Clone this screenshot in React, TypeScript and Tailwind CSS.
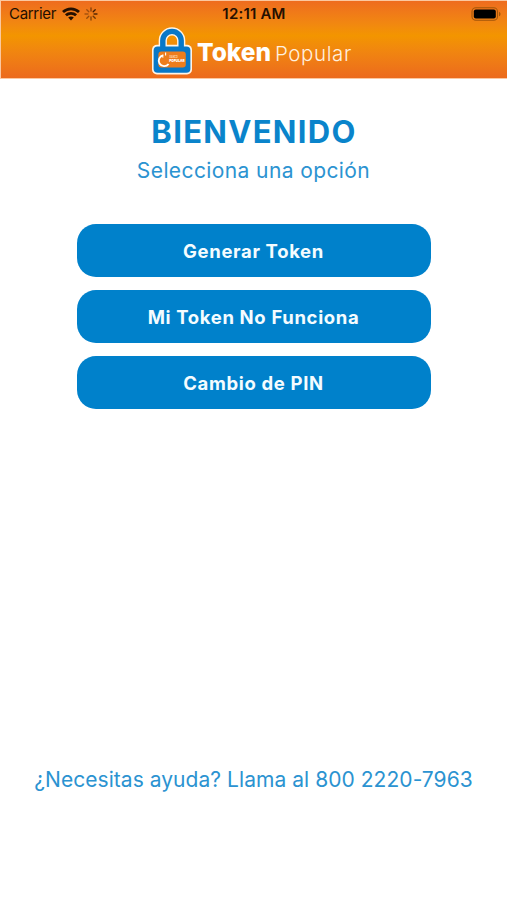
const options = ["Generar Token", "Mi Token No Funciona", "Cambio de PIN"];

const WifiIcon = () => (
  <svg viewBox="0 0 18 14" className="w-[18px] h-[14px] shrink-0" fill="none" stroke="#240f00" strokeWidth="2.8">
    <path d="M1 5.1C5.5.8 12.5.8 17 5.1" />
    <path d="M3.9 8.3c2.9-2.7 7.3-2.7 10.2 0" />
    <path d="M6.2 10.6c1.6-1.5 4-1.5 5.6 0L9 13.4z" fill="#240f00" stroke="none" />
  </svg>
);

const Spinner = () => (
  <svg viewBox="0 0 14 14" className="w-[14px] h-[14px] shrink-0" stroke="#3b1900" strokeWidth="1.3" strokeLinecap="round">
    <path d="M7 1v3" opacity=".6" />
    <path d="M11.2 2.8 9.2 4.8" opacity=".95" />
    <path d="M13 7h-3" opacity=".85" />
    <path d="m11.2 11.2-2-2" opacity=".7" />
    <path d="M7 13v-3" opacity=".6" />
    <path d="m2.8 11.2 2-2" opacity=".5" />
    <path d="M1 7h3" opacity=".4" />
    <path d="m2.8 2.8 2 2" opacity=".45" />
  </svg>
);

const Battery = () => (
  <svg viewBox="0 0 30 14" className="w-[30px] h-[14px]">
    <rect x="1" y=".7" width="25.5" height="12.6" rx="3.8" fill="none" stroke="#a3560a" strokeWidth="1.1" />
    <rect x="2.8" y="2.4" width="22" height="9.2" rx="2" fill="#000" />
    <path d="M28 4.7c2 .8 2 3.8 0 4.6z" fill="#a3560a" />
  </svg>
);

const PadlockLogo = () => (
  <svg viewBox="0 0 42 50" className="w-[42px] h-[50px] shrink-0">
    <path d="M11.8 23v-8.4a9.2 9.2 0 0 1 18.4 0V23" fill="none" stroke="#fff4e6" strokeWidth="8.2" />
    <rect x="1" y="18.8" width="40" height="29.6" rx="5" fill="#fff4e6" />
    <path d="M11.8 23v-8.4a9.2 9.2 0 0 1 18.4 0V23" fill="none" stroke="#0878c8" strokeWidth="5.4" />
    <rect x="2.6" y="20.4" width="36.8" height="26.4" rx="4" fill="#0878c8" />
    <rect x="7.4" y="25.4" width="27.4" height="16" rx="3" fill="#ed7d1d" />
    <path d="M12.4 29.2a5.5 5.5 0 1 0 5.2 8.8" fill="none" stroke="#fff" strokeWidth="1.9" />
    <path d="M14.6 26.6v3M10 30.2l2.4 1" fill="none" stroke="#fff" strokeWidth="1.1" />
    <text x="18.6" y="31.7" fontSize="3.4" fontWeight="700" fill="#ffd9b3" textLength="8" lengthAdjust="spacingAndGlyphs">BANCO</text>
    <text x="18.2" y="35.7" fontSize="4.1" fontWeight="900" fill="#fff" textLength="15.4" lengthAdjust="spacingAndGlyphs">POPULAR</text>
  </svg>
);

const StatusBar = () => (
  <div className="grid grid-cols-3 items-center h-[25px] pl-[8px] pr-[6px] text-[#240f00]">
    <div className="flex items-center gap-[6px]">
      <span className="text-[15px] leading-none tracking-[-0.3px] w-[47px] whitespace-nowrap">Carrier</span>
      <WifiIcon />
      <div className="-ml-[2px] flex">
        <Spinner />
      </div>
    </div>
    <span className="text-center text-[15px] leading-none font-semibold tracking-[0.2px] whitespace-nowrap -ml-[2px]">12:11 AM</span>
    <div className="flex justify-end">
      <Battery />
    </div>
  </div>
);

const Header = () => (
  <header className="h-[79px] border-t border-l border-b border-[#fbc8a0] bg-linear-to-b from-[#ee6c1e] via-[#f39500] via-45% to-[#ec6a1c]">
    <StatusBar />
    <div className="flex items-center h-[50px] pl-[150px] text-white">
      <PadlockLogo />
      <div className="flex items-baseline ml-[4px] pt-[2px] leading-none whitespace-nowrap">
        <span className="text-[24.5px] font-extrabold w-[78px]">Token</span>
        <span className="text-[20.5px] font-light tracking-[0.6px] text-[#fff0df]">Popular</span>
      </div>
    </div>
  </header>
);

const App = () => {
  return (
    <div className="flex flex-col h-[900px] w-full bg-white font-['Inter',sans-serif] text-[#0a84cb]">
      <Header />
      <main className="flex flex-col flex-grow items-center">
        <h1 className="mt-[35px] pl-px text-[31px] leading-9 font-bold tracking-[1.3px]">BIENVENIDO</h1>
        <p className="mt-[6px] text-[21px] leading-7 font-normal tracking-[0.4px] pt-px text-[#2b93d1]">Selecciona una opción</p>
        <div className="flex flex-col gap-[13px] mt-[39px] w-[354px]">
          {options.map((option) => (
            <button
              key={option}
              className="h-[53px] rounded-[19px] bg-[#0081cb] text-[#f4fcff] text-[18.5px] font-bold tracking-[0.65px] pt-[2px]"
            >
              {option}
            </button>
          ))}
        </div>
        <p className="mt-auto mb-[106px] text-[21px] leading-7 font-normal tracking-[0.05px] whitespace-nowrap text-[#2b93d1]">
          ¿Necesitas ayuda? Llama al 800 2220-7963
        </p>
      </main>
    </div>
  );
};

export default App;
